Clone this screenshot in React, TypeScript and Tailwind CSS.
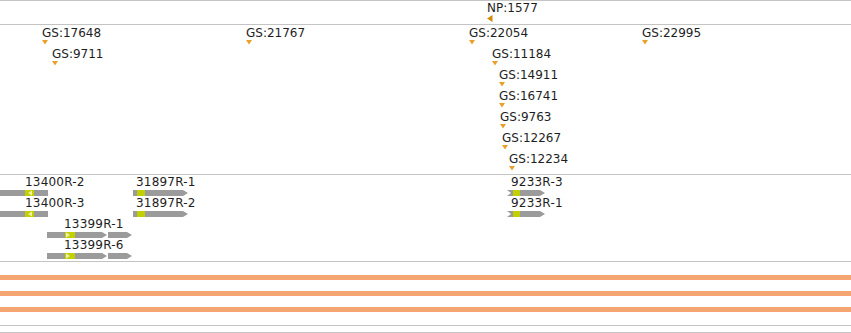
import React from "react";

const GRAY = "#9b9b9b";
const LIME = "#c3d000";

type Seg = [number, number, boolean];
type Exon = [number, number, string];

const gsFeatures = [
  { t: "GS:17648", c: "left-[42px] top-[1px]" },
  { t: "GS:9711", c: "left-[52px] top-[22px]" },
  { t: "GS:21767", c: "left-[246px] top-[1px]" },
  { t: "GS:22054", c: "left-[469px] top-[1px]" },
  { t: "GS:22995", c: "left-[642px] top-[1px]" },
  { t: "GS:11184", c: "left-[492px] top-[22px]" },
  { t: "GS:14911", c: "left-[499px] top-[43px]" },
  { t: "GS:16741", c: "left-[499px] top-[64px]" },
  { t: "GS:9763", c: "left-[500px] top-[85px]" },
  { t: "GS:12267", c: "left-[502px] top-[106px]" },
  { t: "GS:12234", c: "left-[509px] top-[127px]" },
];

const genes: {
  label: string;
  c: string;
  pad: string;
  w: number;
  segs: Seg[];
  exons: Exon[];
  notch?: boolean;
}[] = [
  { label: "13400R-2", c: "left-0 top-0", pad: "pl-[25px]", w: 48, segs: [[0, 48, false]], exons: [[25, 34, "l"]] },
  { label: "13400R-3", c: "left-0 top-[21px]", pad: "pl-[25px]", w: 48, segs: [[0, 48, false]], exons: [[25, 34, "l"]] },
  { label: "31897R-1", c: "left-[133px] top-0", pad: "pl-[3px]", w: 55, segs: [[0, 55, true]], exons: [[4, 12, ""]] },
  { label: "31897R-2", c: "left-[133px] top-[21px]", pad: "pl-[3px]", w: 55, segs: [[0, 55, true]], exons: [[4, 12, ""]] },
  {
    label: "13399R-1",
    c: "left-[47px] top-[42px]",
    pad: "pl-[17px]",
    w: 86,
    segs: [[0, 60, true], [61, 85, true]],
    exons: [[18, 28, "r"]],
  },
  {
    label: "13399R-6",
    c: "left-[47px] top-[63px]",
    pad: "pl-[17px]",
    w: 86,
    segs: [[0, 60, true], [61, 85, true]],
    exons: [[18, 28, "r"]],
  },
  { label: "9233R-3", c: "left-[507px] top-0", pad: "pl-[4px]", w: 38, segs: [[0, 38, true]], exons: [[6, 13, ""]], notch: true },
  { label: "9233R-1", c: "left-[507px] top-[21px]", pad: "pl-[4px]", w: 38, segs: [[0, 38, true]], exons: [[6, 13, ""]], notch: true },
];

function DownMark() {
  return (
    <svg width="6" height="5" className="block">
      <polygon points="0,0 6,0 3,4.5" fill="#e9a12b" />
    </svg>
  );
}

function GeneBar({ w, segs, exons, notch }: { w: number; segs: Seg[]; exons: Exon[]; notch?: boolean }) {
  return (
    <svg width={w} height="6" className="block mt-[1px]">
      {segs.map(([a, b, tip], i) =>
        tip ? (
          <polygon key={i} points={`${a},0 ${b - 5},0 ${b},3 ${b - 5},6 ${a},6`} fill={GRAY} />
        ) : (
          <rect key={i} x={a} y="0" width={b - a} height="6" fill={GRAY} />
        )
      )}
      {notch && <polygon points="0,0 4,3 0,6" fill="#ffffff" />}
      {exons.map(([a, b, dir], i) => (
        <g key={i}>
          <rect x={a} y="0" width={b - a} height="6" fill={LIME} />
          {dir === "l" && <polygon points={`${a + 3},3 ${b - 2},0.5 ${b - 2},5.5`} fill="#eef3a6" />}
          {dir === "r" && <polygon points={`${a + 1},0.5 ${a + 5},3 ${a + 1},5.5`} fill="#eef3a6" />}
        </g>
      ))}
    </svg>
  );
}

export default function App() {
  return (
    <div className="w-[851px] h-[333px] bg-white overflow-hidden text-[12px] leading-[14px] text-[#1e1e1e] font-['DejaVu_Sans',sans-serif]">
      <div className="relative h-[24px] border-t border-[#c4c4c4]">
        <div className="absolute left-[487px] top-0">
          <div>NP:1577</div>
          <svg width="6" height="7" className="block">
            <polygon points="5.5,0 5.5,7 0,3.5" fill="#cf8a06" />
          </svg>
        </div>
      </div>

      <div className="relative h-[150px] border-t border-[#c4c4c4]">
        {gsFeatures.map((f) => (
          <div key={f.t} className={`absolute ${f.c}`}>
            <div className="whitespace-nowrap">{f.t}</div>
            <DownMark />
          </div>
        ))}
      </div>

      <div className="relative h-[87px] border-t border-[#c4c4c4]">
        {genes.map((g) => (
          <div key={g.label} className={`absolute ${g.c}`}>
            <div className={`${g.pad} whitespace-nowrap tracking-[0.2px]`}>{g.label}</div>
            <GeneBar w={g.w} segs={g.segs} exons={g.exons} notch={g.notch} />
          </div>
        ))}
      </div>

      <div className="h-[64px] border-t border-[#c4c4c4] flex flex-col gap-[11px] pt-[13px]">
        <div className="h-[5px] bg-[#f5a571]" />
        <div className="h-[5px] bg-[#f5a571]" />
        <div className="h-[5px] bg-[#f5a571]" />
      </div>

      <div className="h-[7px] border-t border-[#c4c4c4]" />
      <div className="h-px bg-[#c4c4c4]" />
    </div>
  );
}
